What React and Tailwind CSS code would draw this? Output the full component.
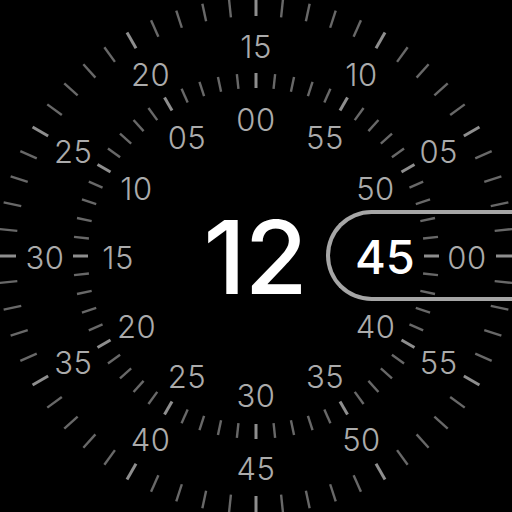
import React from "react";

const C = 256;

function pos(angleDeg, r) {
  const a = (angleDeg * Math.PI) / 180;
  return { x: C + r * Math.sin(a), y: C - r * Math.cos(a) };
}

function Ticks() {
  const lines = [];
  for (let i = 0; i < 60; i++) {
    const ang = i * 6;
    const major = i % 5 === 0;
    const o1 = pos(ang, 240);
    const o2 = pos(ang, 258);
    const i1 = pos(ang, 168);
    const i2 = pos(ang, 183);
    const stroke = major ? "#8e8e8e" : "#686868";
    const w = major ? 3 : 2.4;
    lines.push(
      <line key={"o" + i} x1={o1.x} y1={o1.y} x2={o2.x} y2={o2.y} stroke={stroke} strokeWidth={w} />
    );
    lines.push(
      <line key={"i" + i} x1={i1.x} y1={i1.y} x2={i2.x} y2={i2.y} stroke={stroke} strokeWidth={w} />
    );
  }
  return (
    <svg width="512" height="512" viewBox="0 0 512 512" className="absolute inset-0">
      {lines}
    </svg>
  );
}

const pad = (n) => String(n).padStart(2, "0");

export default function App() {
  const labels = [];
  for (let k = 0; k < 12; k++) {
    const v = k * 5;
    if (v !== 45) {
      const p = pos(-v * 6, 138);
      labels.push({ key: "in" + v, text: pad(v), x: p.x, y: p.y });
    }
    const q = pos((15 - v) * 6, 211);
    labels.push({ key: "out" + v, text: pad(v), x: q.x, y: q.y });
  }

  return (
    <div
      className="relative w-[512px] h-[512px] overflow-hidden bg-black"
      style={{ fontFamily: "Inter, 'Noto Sans', sans-serif" }}
    >
      <Ticks />
      {labels.map((l) => (
        <span
          key={l.key}
          className="absolute -translate-x-1/2 -translate-y-1/2 text-[31px] leading-none font-light text-[#ababab] tracking-[0.5px]"
          style={{ left: l.x, top: l.y + 0.5 }}
        >
          {l.text}
        </span>
      ))}
      <div className="absolute inset-0 flex items-center justify-center">
        <span className="text-[102px] leading-none font-medium text-white tracking-[-1px] pt-[2px] pr-[2px]">12</span>
      </div>
      <div className="absolute left-[326px] top-[210px] w-[210px] h-[91px] rounded-l-full border-[4px] border-r-0 border-[#a6a6a6] flex items-center pl-[25px]">
        <span className="text-[47px] leading-none font-medium text-white pt-[2px]">45</span>
      </div>
    </div>
  );
}
